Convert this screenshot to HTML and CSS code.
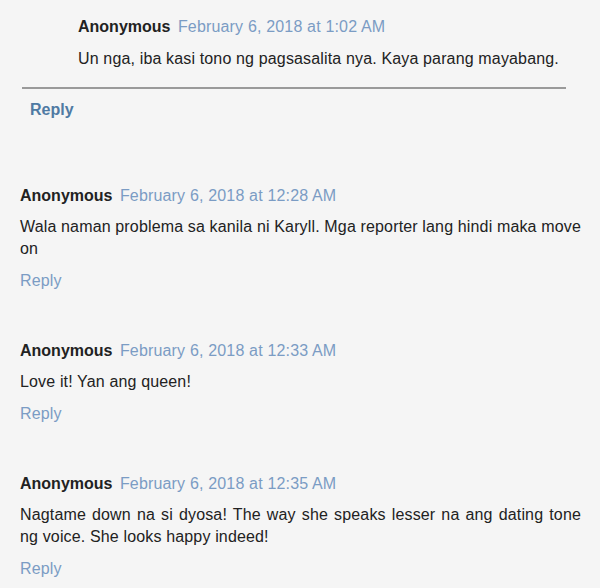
FILE: index.html
```html
<!DOCTYPE html>
<html lang="en">
<head>

    <meta charset="UTF-8">
    <meta name="viewport" content="width=device-width, initial-scale=1.0">
    <title>Comments</title>

    <link rel="stylesheet" href="styles.css">

</head>

<body>

    <div id="comments">

        <div class="thread">
            <div class="comment nested">
                <p class="comment-head"><span class="author">Anonymous</span> <span class="date">February 6, 2018 at 1:02 AM</span></p>
                <p class="comment-body">Un nga, iba kasi tono ng pagsasalita nya. Kaya parang mayabang.</p>
            </div>
            <div class="thread-reply">
                <a href="#" class="thread-reply-link">Reply</a>
            </div>
        </div>

        <div class="comment">
            <p class="comment-head"><span class="author">Anonymous</span> <span class="date">February 6, 2018 at 12:28 AM</span></p>
            <p class="comment-body">Wala naman problema sa kanila ni Karyll. Mga reporter lang hindi maka move on</p>
            <a href="#" class="reply-link">Reply</a>
        </div>

        <div class="comment">
            <p class="comment-head"><span class="author">Anonymous</span> <span class="date">February 6, 2018 at 12:33 AM</span></p>
            <p class="comment-body">Love it! Yan ang queen!</p>
            <a href="#" class="reply-link">Reply</a>
        </div>

        <div class="comment">
            <p class="comment-head"><span class="author">Anonymous</span> <span class="date">February 6, 2018 at 12:35 AM</span></p>
            <p class="comment-body">Nagtame down na si dyosa! The way she speaks lesser na ang dating tone ng voice. She looks happy indeed!</p>
            <a href="#" class="reply-link">Reply</a>
        </div>

    </div>

</body>
</html>
```

FILE: styles.css
```css
body {

    font-family: Arial, "Liberation Sans", sans-serif;
    font-size: 16px;
    line-height: 22px;
    background-color: #f5f5f5;
    color: #222;
    margin: 0;
    padding: 0;

}

#comments {

    width: 561px;
    padding: 16px 0 0 20px;

}

.thread {

    margin-left: 2px;
    width: 544px;
    margin-bottom: 64px;

}

.comment {

    margin-bottom: 48px;

}

.comment:last-child {

    margin-bottom: 0;

}

.comment.nested {

    padding-left: 56px;
    margin-bottom: 0;
    padding-bottom: 17px;
    border-bottom: 2px solid #9a9a9a;

}

.comment-head {

    margin: 0;

}

.author {

    font-weight: bold;
    color: #222;
    margin-right: 3px;

}

.date {

    color: #7b9cc4;
    letter-spacing: 0.17px;

}

.comment-body {

    margin: 9px 0 10px 0;
    text-align: justify;
    letter-spacing: 0.15px;

}

.nested .comment-body {

    margin-bottom: 0;
    margin-top: 10px;
    text-align: left;

}

.reply-link {

    color: #7b9cc4;
    text-decoration: none;
    letter-spacing: 0.15px;

}

.thread-reply {

    padding: 10px 0 0 8px;

}

.thread-reply-link {

    color: #4f7aa3;
    font-weight: bold;
    text-decoration: none;

}
```
